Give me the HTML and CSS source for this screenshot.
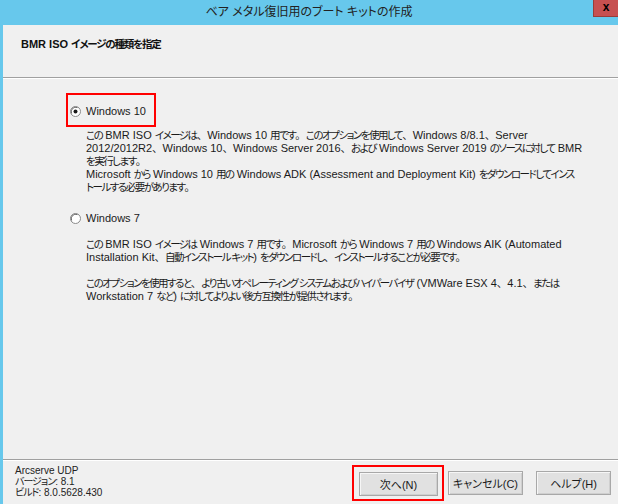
FILE: index.html
```html
<!DOCTYPE html>
<html lang="ja">
<head>
<meta charset="utf-8">
<title>ベア メタル復旧用のブート キットの作成</title>
<link rel="stylesheet" href="styles.css">
</head>
<body>
<div class="window">
  <div class="titlebar">
    <span class="spacer"></span>
    <span class="title">ベア メタル復旧用のブート キットの作成</span>
    <span class="close-btn">x</span>
  </div>
  <div class="body">
    <div class="header">BMR ISO <span class="j">イメージの種類を指定</span></div>
    <div class="sep"></div>
    <div class="content">
      <div class="option annot">
        <svg class="radio" width="11" height="11" viewBox="0 0 11 11"><circle cx="5.5" cy="5.5" r="5" fill="#fff" stroke="#8a8a8a"/><path d="M1.6 7.5 A4.5 4.5 0 0 1 7.5 1.6" fill="none" stroke="#6a6a6a"/><circle cx="5.5" cy="5.5" r="2" fill="#1a1a1a"/></svg>
        <span class="opt-label">Windows 10</span>
      </div>
      <p class="desc"><span class="j">この</span> BMR ISO <span class="j">イメージは</span><span class="jp">、</span>Windows 10 <span class="j">用です</span><span class="jp">。</span><span class="j">このオプションを使用して</span><span class="jp">、</span>Windows 8/8.1<span class="jp">、</span>Server<br>2012/2012R2<span class="jp">、</span>Windows 10<span class="jp">、</span>Windows Server 2016<span class="jp">、</span><span class="j">および</span> Windows Server 2019 <span class="j">のソースに対して</span> BMR<br><span class="j">を実行します</span><span class="jp">。</span><br>Microsoft <span class="j">から</span> Windows 10 <span class="j">用の</span> Windows ADK (Assessment and Deployment Kit) <span class="j">をダウンロードしてインス</span><br><span class="j">トールする必要があります</span><span class="jp">。</span></p>
      <div class="option plain">
        <svg class="radio" width="11" height="11" viewBox="0 0 11 11"><circle cx="5.5" cy="5.5" r="5" fill="#fff" stroke="#8a8a8a"/><path d="M1.6 7.5 A4.5 4.5 0 0 1 7.5 1.6" fill="none" stroke="#6a6a6a"/></svg>
        <span class="opt-label">Windows 7</span>
      </div>
      <p class="desc desc-gap"><span class="j">この</span> BMR ISO <span class="j">イメージは</span> Windows 7 <span class="j">用です</span><span class="jp">。</span>Microsoft <span class="j">から</span> Windows 7 <span class="j">用の</span> Windows AIK (Automated<br>Installation Kit<span class="jp">、</span><span class="j">自動インストール キット</span>) <span class="j">をダウンロードし</span><span class="jp">、</span><span class="j">インストールすることが必要です</span><span class="jp">。</span></p>
      <p class="desc desc-para"><span class="j">このオプションを使用すると</span><span class="jp">、</span><span class="j">より古いオペレーティング システムおよびハイパーバイザ</span> (VMWare ESX 4<span class="jp">、</span>4.1<span class="jp">、</span><span class="j">または</span><br>Workstation 7 <span class="j">など</span>) <span class="j">に対してよりよい後方互換性が提供されます</span><span class="jp">。</span></p>
    </div>
    <div class="sep"></div>
    <div class="footer">
      <div class="info">Arcserve UDP<br><span class="j">バージョン</span>: 8.1<br><span class="j">ビルド</span>: 8.0.5628.430</div>
      <div class="buttons">
        <div class="btn-annot"><button class="btn btn-next">次へ(N)</button></div>
        <button class="btn btn-cancel">キャンセル(C)</button>
        <button class="btn btn-help">ヘルプ(H)</button>
      </div>
    </div>
  </div>
</div>
</body>
</html>
```

FILE: styles.css
```css
* { box-sizing: border-box; }
html, body { margin: 0; padding: 0; }
body {
  width: 618px;
  height: 504px;
  overflow: hidden;
  background: #f0f0f0;
  font-family: "Liberation Sans", "Noto Sans CJK JP", sans-serif;
  font-feature-settings: "palt";
  color: #1a1a1a;
}
.window {
  width: 618px;
  height: 504px;
  display: flex;
  flex-direction: column;
}
.titlebar {
  height: 25px;
  background: #67c8ec;
  display: grid;
  grid-template-columns: 1fr auto 1fr;
  align-items: start;
}
.title {
  font-size: 12px;
  line-height: 25px;
  color: #222;
  white-space: nowrap;
}
.close-btn {
  justify-self: end;
  width: 25px;
  height: 17px;
  background: #c75050;
  border-left: 1px solid #9a3c38;
  border-bottom: 1px solid #9a3c38;
  color: #000;
  font-family: "Liberation Sans", sans-serif;
  font-weight: bold;
  font-size: 12px;
  line-height: 15px;
  text-align: center;
}
.body {
  flex: 1;
  border-left: 3px solid #67c8ec;
  display: flex;
  flex-direction: column;
}
.header {
  height: 52px;
  padding: 12px 0 0 18px;
  font-size: 11px;
  line-height: 14px;
  font-weight: bold;
  color: #111;
}
.header .j {
  font-size: 10.5px;
  letter-spacing: -1.2px;
}
.sep {
  height: 2px;
  border-top: 1px solid #a0a0a0;
  border-bottom: 1px solid #ffffff;
}
.content {
  flex: 1;
  padding: 14px 0 0 63px;
}
.option {
  display: inline-flex;
  align-items: center;
  height: 16px;
}
.option.annot {
  height: 34px;
  border: 2px solid #ff0000;
  padding: 2px 8px 0 2px;
}
.option.plain {
  margin: 16px 0 0 4px;
}
.radio { display: block; flex: none; }
.opt-label {
  margin-left: 5px;
  font-size: 11px;
  line-height: 16px;
  white-space: nowrap;
}
.desc {
  margin: 2px 0 0 20px;
  font-size: 11px;
  line-height: 13px;
  white-space: nowrap;
}
.desc .j {
  font-size: 10.5px;
  letter-spacing: -1.5px;
}
.desc .jp {
  font-size: 10.5px;
  font-feature-settings: normal;
}
.desc-gap { margin-top: 10px; }
.desc-para { margin-top: 13px; }
.footer {
  height: 43px;
  padding: 4px 7px 0 12px;
  display: flex;
  justify-content: space-between;
  align-items: flex-start;
}
.info {
  font-size: 10px;
  line-height: 11px;
  color: #222;
  white-space: nowrap;
}
.info .j {
  letter-spacing: -1px;
}
.buttons {
  display: flex;
  align-items: center;
}
.btn-annot {
  border: 2px solid #ff0000;
  padding: 5px 4px 3px 5px;
  margin-right: 4px;
}
.btn {
  display: block;
  height: 24px;
  padding: 0;
  margin: 0;
  background: #e1e1e1;
  border: 1px solid #a8a8a8;
  box-shadow: inset 1px 1px 0 #f6f6f6, inset -1px -1px 0 #cfcfcf;
  font-family: "Liberation Sans", "Noto Sans CJK JP", sans-serif;
  font-feature-settings: "palt";
  font-size: 11px;
  color: #1a1a1a;
}
.btn-next { width: 79px; }
.btn-cancel { width: 75px; margin-right: 13px; }
.btn-help { width: 75px; }
```
